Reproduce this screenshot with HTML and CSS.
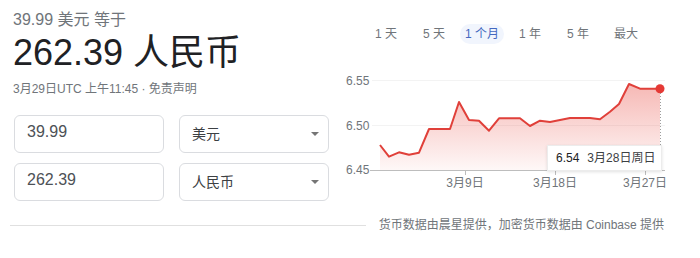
FILE: index.html
```
<!DOCTYPE html>
<html lang="zh-CN">
<head>
    <meta charset="UTF-8">
    <meta name="viewport" content="width=device-width, initial-scale=1.0">
    <title>美元 人民币 汇率</title>
    <link rel="stylesheet" href="styles.css">
</head>
<body>

    <div class="wrap">
        <div class="left">
            <div class="from">39.99 美元 等于</div>
            <div class="result">262.39 人民币</div>
            <div class="meta">3月29日UTC 上午11:45 · 免责声明</div>

            <div class="row">
                <div class="box amount">39.99</div>
                <div class="box currency">美元<span class="arrow"></span></div>
            </div>
            <div class="row">
                <div class="box amount">262.39</div>
                <div class="box currency">人民币<span class="arrow"></span></div>
            </div>
        </div>

        <div class="right">
            <div class="tabs">
                <span class="tab">1 天</span>
                <span class="tab">5 天</span>
                <span class="tab active">1 个月</span>
                <span class="tab">1 年</span>
                <span class="tab">5 年</span>
                <span class="tab">最大</span>
            </div>

            <div class="chart">
                <svg width="330" height="135" viewBox="340 60 330 135">
                    <defs>
                        <linearGradient id="fill" x1="0" y1="0" x2="0" y2="1">
                            <stop offset="0" stop-color="#e8453c" stop-opacity="0.38"/>
                            <stop offset="1" stop-color="#e8453c" stop-opacity="0.04"/>
                        </linearGradient>
                    </defs>

                    <!-- grid -->
                    <line class="grid" x1="372" y1="80.5" x2="665" y2="80.5"/>
                    <line class="grid" x1="372" y1="125.5" x2="665" y2="125.5"/>

                    <text class="ylabel" x="346" y="85">6.55</text>
                    <text class="ylabel" x="346" y="130">6.50</text>
                    <text class="ylabel" x="346" y="174">6.45</text>

                    <!-- area + line -->
                    <polygon fill="url(#fill)" points="380,170 380,145 389,156.7 399,152.3 409,154.7 419,152.7 429,129 450,129 459,102 469,120 479,120.7 489,130.7 499,118.3 520,118.3 530,126 540,120.7 550,122 560,120 570,118 590,118 600,119.3 610,111.7 619,104 629,84 640,88.7 660,88.7 660,170"/>
                    <polyline class="line" points="380,145 389,156.7 399,152.3 409,154.7 419,152.7 429,129 450,129 459,102 469,120 479,120.7 489,130.7 499,118.3 520,118.3 530,126 540,120.7 550,122 560,120 570,118 590,118 600,119.3 610,111.7 619,104 629,84 640,88.7 660,88.7"/>

                    <line class="cursor" x1="660.5" y1="90" x2="660.5" y2="170"/>

                    <!-- axis -->
                    <line class="axis" x1="370" y1="170.5" x2="665" y2="170.5"/>
                    <line class="tick" x1="465.5" y1="170" x2="465.5" y2="175"/>
                    <line class="tick" x1="555.5" y1="170" x2="555.5" y2="175"/>
                    <line class="tick" x1="645.5" y1="170" x2="645.5" y2="175"/>

                    <text class="xlabel" x="465" y="187">3月9日</text>
                    <text class="xlabel" x="555" y="187">3月18日</text>
                    <text class="xlabel" x="645" y="187">3月27日</text>

                    <circle cx="660" cy="88.7" r="4.5" fill="#e53935"/>
                </svg>

                <div class="tooltip"><b>6.54</b>3月28日周日</div>
            </div>
        </div>
    </div>

    <div class="footer">
        <div class="rule"></div>
        <div class="source">货币数据由晨星提供，加密货币数据由 Coinbase 提供</div>
    </div>

</body>
</html>
```

FILE: styles.css
```
body {
    font-family: "Liberation Sans", Arial, "Noto Sans CJK SC", sans-serif;
    margin: 0;
    background: #fff;
    color: #202124;
}

.wrap {
    display: flex;
    padding-left: 13px;
}

.left {
    width: 327px;
}

.from {
    padding-top: 10px;
    font-size: 16px;
    line-height: 20px;
    color: #70757a;
}

.result {
    margin-top: 1px;
    font-size: 36px;
    line-height: 44px;
    color: #202124;
}

.meta {
    margin-top: 6px;
    font-size: 12px;
    line-height: 16px;
    color: #70757a;
}

.row {
    display: flex;
    gap: 15px;
    margin-left: 1px;
    margin-top: 10px;
}

.meta + .row {
    margin-top: 18px;
}

.box {
    width: 150px;
    height: 38px;
    box-sizing: border-box;
    border: 1px solid #dadce0;
    border-radius: 6px;
    display: flex;
    align-items: center;
    padding-left: 12px;
}

.amount {
    font-size: 16px;
    line-height: 20px;
    color: #4d5156;
    padding-bottom: 4px;
}

.currency {
    font-size: 14px;
    line-height: 20px;
    color: #3c4043;
    padding-right: 9px;
    justify-content: space-between;
}

.arrow {
    width: 0;
    height: 0;
    border-left: 4px solid transparent;
    border-right: 4px solid transparent;
    border-top: 4px solid #757575;
}

.right {
    width: 360px;
}

.tabs {
    display: flex;
    gap: 4px;
    margin-top: 24px;
    margin-left: 24px;
}

.tab {
    width: 44px;
    height: 20px;
    line-height: 20px;
    text-align: center;
    font-size: 12px;
    color: #70757a;
    border-radius: 10px;
}

.tab.active {
    background: #f1f5fd;
    color: #4468c0;
}

.chart {
    position: relative;
    margin-top: 16px;
    height: 135px;
}

.chart svg {
    display: block;
}

.grid {
    stroke: #f3f3f3;
    stroke-width: 1;
}

.axis {
    stroke: #bdbdbd;
    stroke-width: 1;
}

.tick {
    stroke: #bdbdbd;
    stroke-width: 1;
}

.cursor {
    stroke: #9e9e9e;
    stroke-width: 1;
    stroke-dasharray: 1 2;
}

.line {
    fill: none;
    stroke: #e0403a;
    stroke-width: 2;
    stroke-linejoin: round;
}

.ylabel, .xlabel {
    font-family: "Liberation Sans", Arial, "Noto Sans CJK SC", sans-serif;
    font-size: 12px;
    fill: #70757a;
}

.xlabel {
    text-anchor: middle;
}

.tooltip {
    position: absolute;
    left: 207px;
    top: 85px;
    width: 115px;
    height: 26px;
    box-sizing: border-box;
    background: #fff;
    border: 1px solid #ececec;
    box-shadow: 0 1px 3px rgba(0, 0, 0, 0.12);
    font-size: 12px;
    line-height: 24px;
    padding-left: 8px;
    color: #3c4043;
    white-space: nowrap;
}

.tooltip b {
    font-weight: normal;
    color: #202124;
    margin-right: 8px;
}

.footer {
    display: flex;
    align-items: center;
    margin-top: 16px;
    padding-left: 10px;
}

.rule {
    flex: 1;
    height: 1px;
    background: #e0e0e0;
}

.source {
    margin-left: 13px;
    margin-right: 36px;
    font-size: 12px;
    line-height: 16px;
    color: #70757a;
}
```
